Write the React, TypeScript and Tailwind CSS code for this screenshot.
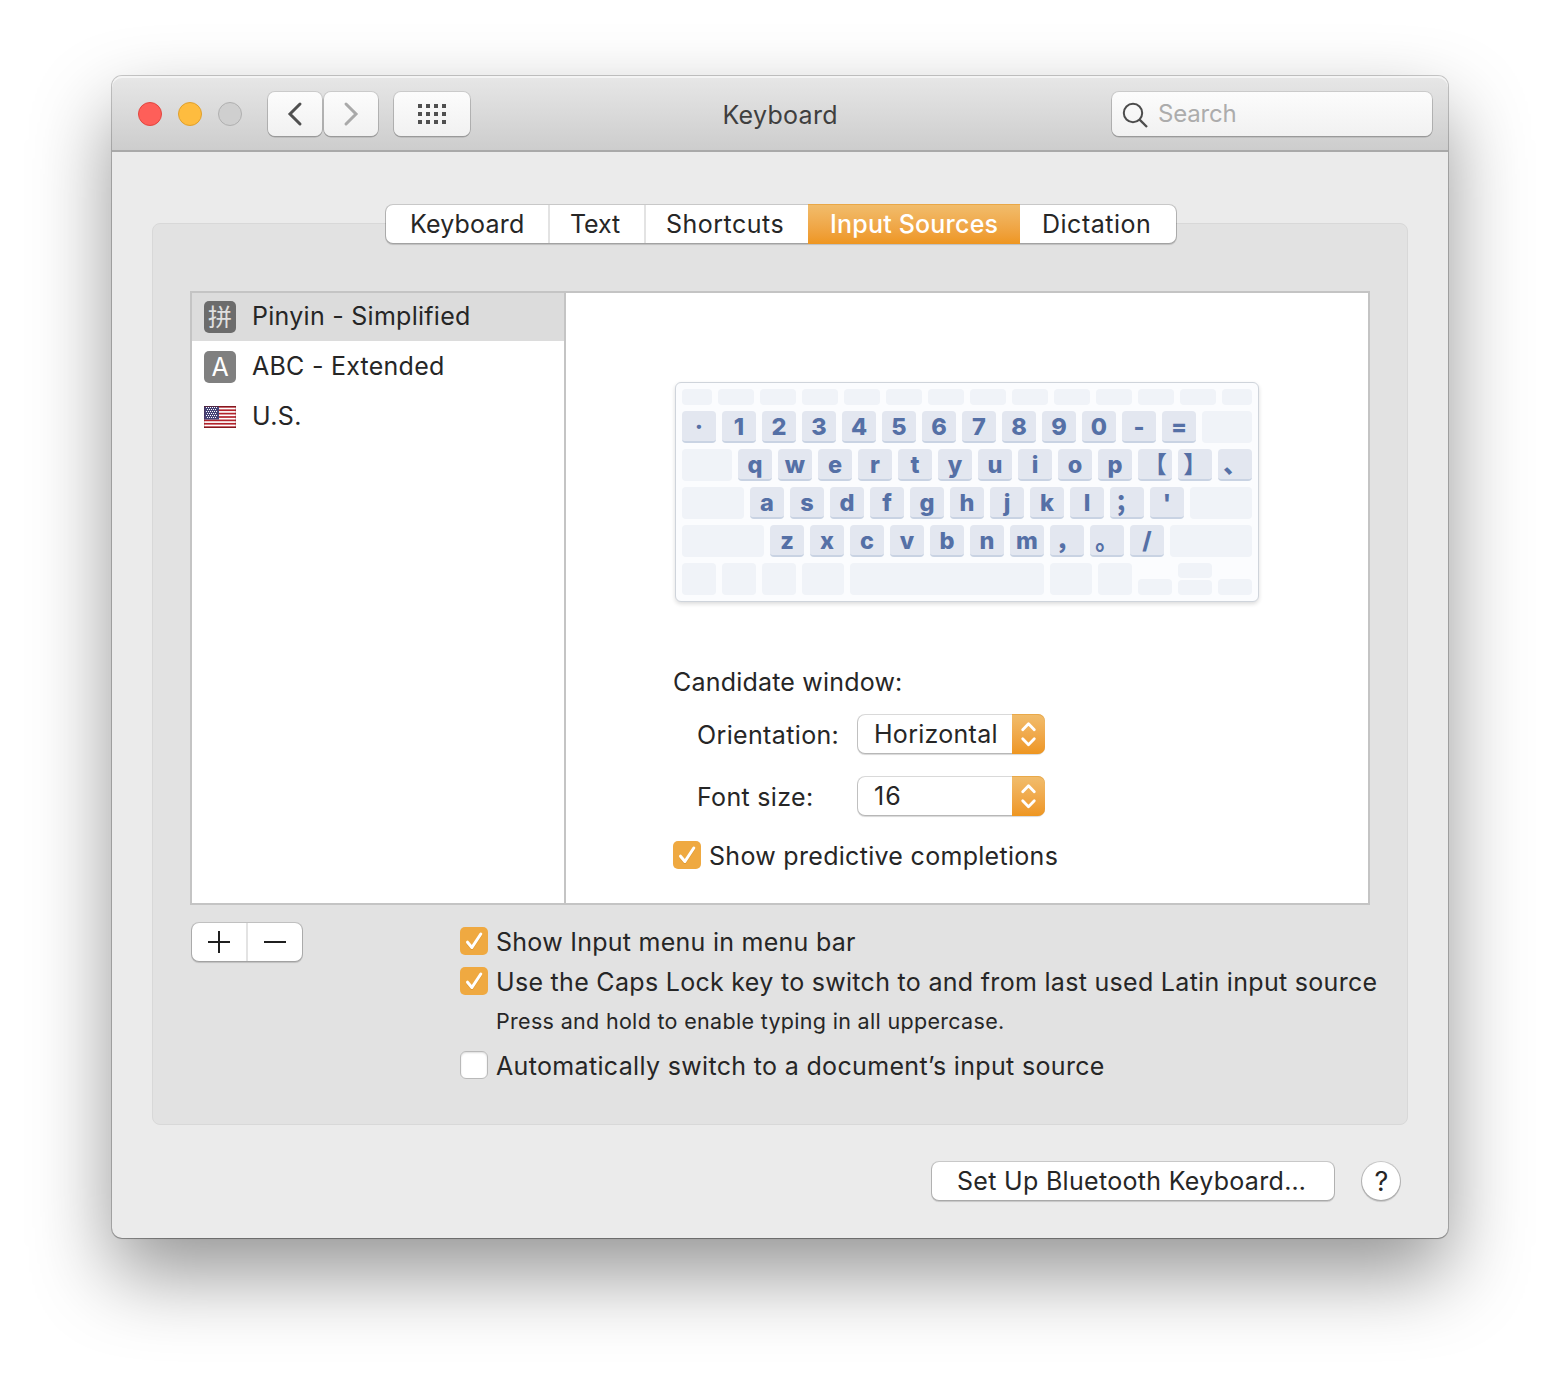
import type { ReactNode } from 'react';

const raised = 'bg-white shadow-[0_0_0_1px_rgba(0,0,0,0.15),0_1px_0_1px_rgba(0,0,0,0.1),0_2px_2px_rgba(0,0,0,0.06)]';
const toolbarButton =
  'flex h-11 items-center rounded-[7px] bg-gradient-to-b from-[#fcfcfc] to-[#f1f1f1] shadow-[0_0_0_1px_rgba(0,0,0,0.1),0_1px_0_0.5px_rgba(0,0,0,0.18)]';
const orange = 'bg-gradient-to-b from-[#f1bd6c] to-[#ee961f]';

const tabs = [
  { label: 'Keyboard', box: 'h-[38px] w-[164px] pl-[24px] leading-[38px] border-r-2 border-[#e3e3e3] tracking-[0.18px]' },
  { label: 'Text', box: 'h-[38px] w-[96px] pl-[20px] leading-[38px] border-r-2 border-[#e3e3e3] tracking-[-0.1px]' },
  { label: 'Shortcuts', box: 'h-[38px] w-[162px] pl-5 leading-[38px] tracking-[0.5px]' },
  { label: 'Input Sources', box: '-mt-px h-[39.5px] w-[212px] pl-[22px] leading-[40px] text-white tracking-[0.2px] font-[450] shadow-[inset_0_1px_0_rgba(225,150,40,0.55)] ' + orange },
  { label: 'Dictation', box: 'h-[38px] w-[156px] pl-[22px] leading-[38px] tracking-[0.5px]' },
];

function TitleBar() {
  return (
    <header className="flex h-[76px] items-start rounded-t-[10px] border-b-2 border-[#a9a9a9] bg-gradient-to-b from-[#e7e7e7] to-[#cdcdcd] pt-4 pr-4 pl-[26px] shadow-[inset_0_2px_0_rgba(255,255,255,0.55)]">
      <div className="mt-[10px] flex gap-4">
        <span className="size-6 rounded-full border border-[#e2463f] bg-[#fe5f59]" />
        <span className="size-6 rounded-full border border-[#e0a02c] bg-[#febc3f]" />
        <span className="size-6 rounded-full border border-[#b0b0b0] bg-[#cfcfcf]" />
      </div>
      <div className="ml-[26px] flex gap-[2px]">
        <button className={toolbarButton + ' w-[54px] justify-center'}>
          <svg width="54" height="44" viewBox="0 0 54 44" fill="none" stroke="#505050" strokeWidth="3" strokeLinecap="round">
            <path d="M32 12 L22 22 L32 32" />
          </svg>
        </button>
        <button className={toolbarButton + ' w-[54px] justify-center'}>
          <svg width="54" height="44" viewBox="0 0 54 44" fill="none" stroke="#a9a9a9" strokeWidth="3" strokeLinecap="round">
            <path d="M22 12 L32 22 L22 32" />
          </svg>
        </button>
      </div>
      <button className={toolbarButton + ' ml-4 w-[76px] justify-center'}>
        <span className="grid grid-cols-4 gap-1">
          {Array.from({ length: 12 }, (_, i) => (
            <span key={i} className="size-1 bg-[#505050]" />
          ))}
        </span>
      </button>
      <h1 className="ml-[252.5px] w-[389.5px] pt-px text-[25px] leading-[44px] tracking-[0.3px] text-[#3f3f3f]">Keyboard</h1>
      <div className={toolbarButton + ' w-[320px]'}>
        <svg width="46" height="44" viewBox="0 0 46 44" fill="none" stroke="#4c4c4c" strokeWidth="2">
          <circle cx="21" cy="21" r="9.2" />
          <path d="M27.6 27.6 L35 35" strokeWidth="2.3" />
        </svg>
        <span className="-mt-px text-[24px] leading-[44px] tracking-[-0.19px] text-[#acacac]">Search</span>
      </div>
    </header>
  );
}

function Tabs() {
  return (
    <nav className={'relative -mt-[19px] flex h-[38px] w-[790px] rounded-[7px] ' + raised}>
      {tabs.map((t) => (
        <button key={t.label} className={'text-left text-[25px] whitespace-nowrap ' + t.box}>
          {t.label}
        </button>
      ))}
    </nav>
  );
}

function Flag() {
  const stripe = 22 / 13;
  return (
    <svg width="32" height="22" viewBox="0 0 32 22">
      <rect width="32" height="22" fill="#fff" />
      {[0, 2, 4, 6, 8, 10, 12].map((i) => (
        <rect key={i} y={i * stripe} width="32" height={stripe} fill="#b2232c" />
      ))}
      <rect width="15" height={stripe * 8} fill="#454276" />
      {[0, 1, 2, 3, 4, 5].map((r) =>
        Array.from({ length: r % 2 ? 5 : 6 }, (_, c) => (
          <rect key={`${r}-${c}`} x={2 + c * 2 + (r % 2)} y={1 + r * 2} width="1" height="1" fill="#fff" />
        )),
      )}
      <path d="M0 .5 H32 M0 21.5 H32" stroke="#5c1015" strokeOpacity="0.55" />
      <path d="M.5 0 V22 M31.5 0 V22" stroke="#5c1015" strokeOpacity="0.2" />
    </svg>
  );
}

function SourceList() {
  return (
    <div className="w-[374px] border-r-2 border-[#c4c4c4] text-[25px]">
      <div className="flex h-12 items-center bg-[#dcdcdc] pl-3">
        <span className="flex size-8 items-center justify-center rounded-[5px] bg-[#6c6c6c] font-['Noto_Sans_CJK_SC',sans-serif] text-[24px] leading-8 text-[#e0e0e0]">
          <span className="-mt-[2px]">拼</span>
        </span>
        <span className="self-start pl-4 leading-[46px] tracking-[0.27px]">Pinyin - Simplified</span>
      </div>
      <div className="mt-[2px] flex h-12 items-center pl-3">
        <span className="flex size-8 items-center justify-center rounded-[5px] bg-[#808080] text-[25px] leading-8 text-white">A</span>
        <span className="self-start pl-4 leading-[46px] tracking-[0.25px]">ABC - Extended</span>
      </div>
      <div className="mt-[2px] flex h-12 items-center pl-3">
        <Flag />
        <span className="self-start pl-4 leading-[46px] tracking-[0.4px]">U.S.</span>
      </div>
    </div>
  );
}

function Key({ children }: { children: ReactNode }) {
  return (
    <span className="h-8 w-[34px] rounded-[4px] border-b-2 border-[#c9d3e3] bg-[#e3e7f0] text-center text-[23.5px] leading-[32px] font-extrabold text-[#5570a6]">
      {children}
    </span>
  );
}

function Blank({ size }: { size: string }) {
  return <span className={'rounded-[4px] bg-[#f0f3f8] ' + size} />;
}

function Keys({ text }: { text: string }) {
  return (
    <>
      {text.split('').map((c) => (
        <Key key={c}>{c}</Key>
      ))}
    </>
  );
}

function KeyboardPreview() {
  return (
    <div className="flex h-[220px] w-[584px] flex-col gap-[6px] rounded-[6px] border border-[#cfd4db] bg-[#fbfcfe] p-[6px] font-['Inter','Noto_Sans_CJK_SC',sans-serif] shadow-[0_2px_4px_rgba(0,0,0,0.14)]">
      <div className="flex gap-[6px]">
        <Blank size="h-4 w-[30px]" />
        {Array.from({ length: 12 }, (_, i) => (
          <Blank key={i} size="h-4 w-9" />
        ))}
        <Blank size="h-4 w-[30px]" />
      </div>
      <div className="flex gap-[6px]">
        <Keys text="·1234567890-=" />
        <Blank size="h-8 w-[50px]" />
      </div>
      <div className="flex gap-[6px]">
        <Blank size="h-8 w-[50px]" />
        <Keys text="qwertyuiop【】、" />
      </div>
      <div className="flex gap-[6px]">
        <Blank size="h-8 w-[62px]" />
        <Keys text="asdfghjkl；'" />
        <Blank size="h-8 w-[62px]" />
      </div>
      <div className="flex gap-[6px]">
        <Blank size="h-8 w-[82px]" />
        <Keys text="zxcvbnm，。/" />
        <Blank size="h-8 w-[82px]" />
      </div>
      <div className="flex items-end gap-[6px]">
        <Blank size="h-8 w-[34px]" />
        <Blank size="h-8 w-[34px]" />
        <Blank size="h-8 w-[34px]" />
        <Blank size="h-8 w-[42px]" />
        <Blank size="h-8 w-[194px]" />
        <Blank size="h-8 w-[42px]" />
        <Blank size="h-8 w-[34px]" />
        <Blank size="h-4 w-[34px]" />
        <span className="flex flex-col gap-[2px]">
          <Blank size="h-[15px] w-[34px]" />
          <Blank size="h-[15px] w-[34px]" />
        </span>
        <Blank size="h-4 w-[34px]" />
      </div>
    </div>
  );
}

function Select({ value, tracking }: { value: string; tracking: string }) {
  return (
    <div className={'flex h-[38px] w-[186px] justify-between rounded-[7px] ' + raised}>
      <span className={'pl-4 text-[25px] leading-[38px] ' + tracking}>{value}</span>
      <span className={'-mt-px -mr-px h-10 w-[33px] rounded-r-[7px] shadow-[inset_0_1px_0_rgba(225,150,40,0.5)] ' + orange}>
        <svg width="33" height="40" viewBox="0 0 33 40" fill="none" stroke="#fff" strokeWidth="2.8" strokeLinecap="round" strokeLinejoin="round">
          <path d="M10.7 15.8 L16.5 9.8 L22.3 15.8 M10.7 24.8 L16.5 30.8 L22.3 24.8" />
        </svg>
      </span>
    </div>
  );
}

function Checkbox({ checked = false }: { checked?: boolean }) {
  if (!checked) {
    return <span className="size-7 shrink-0 rounded-[6px] border border-[#b9b9b9] bg-white shadow-[inset_0_1px_2px_rgba(0,0,0,0.14)]" />;
  }
  return (
    <svg className="shrink-0 rounded-[5px] bg-[#efa941]" width="28" height="28" viewBox="0 0 28 28" fill="none" strokeLinecap="round" strokeLinejoin="round">
      <path d="M7.5 16.2 L11.9 21.5 L20.8 8" stroke="#c98420" strokeOpacity="0.45" strokeWidth="3" />
      <path d="M7.5 15.2 L11.9 20.5 L20.8 7" stroke="#fff" strokeWidth="3" />
    </svg>
  );
}

function SourceDetail() {
  return (
    <div className="flex flex-1 flex-col pt-[89px] pl-[107px] text-[25px]">
      <div className="pl-[2px]">
        <KeyboardPreview />
      </div>
      <div className="mt-[65px] h-[30px] leading-[30px] tracking-[0.2px]">Candidate window:</div>
      <div className="mt-[18px] flex h-[38px] pl-6">
        <span className="w-[161px] pt-px leading-[38px] tracking-[0.36px]">Orientation:</span>
        <Select value="Horizontal" tracking="tracking-[0.28px]" />
      </div>
      <div className="mt-6 flex h-[38px] pl-6">
        <span className="w-[161px] pt-px leading-[38px] tracking-[0.32px]">Font size:</span>
        <Select value="16" tracking="tracking-[1.2px]" />
      </div>
      <div className="mt-[26px] flex h-7">
        <Checkbox checked />
        <span className="pl-2 leading-[30px] tracking-[0.3px]">Show predictive completions</span>
      </div>
    </div>
  );
}

function Options() {
  return (
    <div className="flex pt-[18px] pl-[39px]">
      <div className={'flex h-[38px] w-[110px] rounded-[7px] ' + raised}>
        <button className="flex w-14 items-center justify-center border-r-2 border-[#e3e3e3]">
          <svg width="22" height="22" viewBox="0 0 22 22" stroke="#1f1f1f" strokeWidth="2">
            <path d="M0 11 H22 M11 0 V22" />
          </svg>
        </button>
        <button className="flex w-[54px] items-center justify-center">
          <svg width="22" height="22" viewBox="0 0 22 22" stroke="#1f1f1f" strokeWidth="2">
            <path d="M0 11 H22" />
          </svg>
        </button>
      </div>
      <div className="mt-1 ml-[158px] text-[25px] whitespace-nowrap">
        <div className="flex h-7">
          <Checkbox checked />
          <span className="pl-2 leading-[30px] tracking-[0.262px]">Show Input menu in menu bar</span>
        </div>
        <div className="mt-3 flex h-7">
          <Checkbox checked />
          <span className="pl-2 leading-[30px] tracking-[0.3px]">Use the Caps Lock key to switch to and from last used Latin input source</span>
        </div>
        <div className="mt-[11px] h-[30px] pl-9 text-[21.5px] leading-[30px] tracking-[0.315px]">Press and hold to enable typing in all uppercase.</div>
        <div className="mt-[15px] flex h-7">
          <Checkbox />
          <span className="pl-2 leading-[30px] tracking-[0.335px]">Automatically switch to a document’s input source</span>
        </div>
      </div>
    </div>
  );
}

export default function App() {
  return (
    <main className="h-[1386px] w-[1560px] overflow-hidden bg-white px-28 pt-[76px] font-['Inter',sans-serif] text-[#262626]">
      <div className="h-[1162px] w-[1336px] rounded-[10px] bg-[#ebebeb] shadow-[0_0_0_1px_rgba(0,0,0,0.2),0_1px_1px_rgba(0,0,0,0.2),0_36px_80px_rgba(0,0,0,0.42)]">
        <TitleBar />
        <section className="mx-10 mt-[71px] flex h-[902px] flex-col rounded-[8px] border border-[#d8d8d8] bg-[#e2e2e2]">
          <div className="pl-[233px]">
            <Tabs />
          </div>
          <div className="mt-[48px] ml-[37px] flex h-[614px] w-[1180px] border-2 border-[#c4c4c4] bg-white">
            <SourceList />
            <SourceDetail />
          </div>
          <Options />
        </section>
        <footer className="flex justify-end pt-[37px] pr-12">
          <button className={'h-[38px] w-[402px] rounded-[7px] pl-[25px] text-left text-[25px] leading-[38px] tracking-[0.31px] ' + raised}>
            Set Up Bluetooth Keyboard…
          </button>
          <button className={'ml-7 size-[38px] rounded-full pl-px text-center text-[27px] leading-[40px] ' + raised}>?</button>
        </footer>
      </div>
    </main>
  );
}
